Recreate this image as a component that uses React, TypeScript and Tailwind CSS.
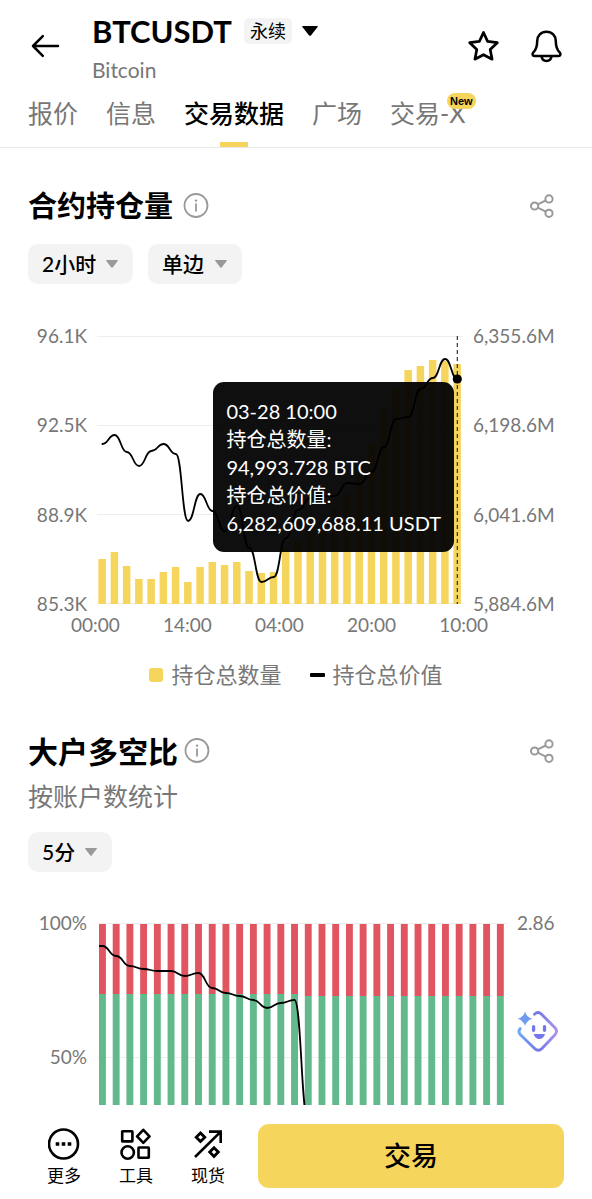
import type { ReactNode } from "react";

const tabs = [
  { label: "报价" },
  { label: "信息" },
  { label: "交易数据", active: true },
  { label: "广场" },
  { label: "交易-X", badge: "New" },
];

// y positions inside the 366x268 plot
const interestBars = [
  223, 216, 230, 243, 243, 236, 231, 246, 231, 226, 229, 226, 235, 237, 236,
  212, 205, 196, 186, 172, 158, 134, 107, 73, 52, 34, 30, 24, 25, 28,
];
const interestLine = [
  108, 99, 116, 130, 115, 108, 118, 185, 158, 175, 195, 170, 212, 246, 241,
  202, 174, 162, 160, 160, 147, 148, 136, 111, 83, 81, 53, 42, 23, 43,
];

// y positions inside the 410x182 plot
const ratioLine = [
  23, 33, 43, 46, 48, 48, 53, 50, 65, 70, 73, 77, 85, 80, 77, 198,
];

function smoothPath(values: number[], start: number, step: number) {
  return values
    .map((y, i) => {
      const x = start + i * step;
      if (i === 0) return `M${x} ${y}`;
      const mid = x - step / 2;
      return `C${mid} ${values[i - 1]} ${mid} ${y} ${x} ${y}`;
    })
    .join(" ");
}

function InfoIcon() {
  return (
    <svg className="h-[26px] w-[26px]" viewBox="0 0 26 26" fill="none">
      <circle cx="13" cy="12.5" r="11.5" stroke="#999" strokeWidth="1.8" />
      <circle cx="13" cy="7.6" r="1.2" fill="#999" />
      <path d="M13 10.500v8" stroke="#999" strokeWidth="1.8" />
    </svg>
  );
}

function ShareIcon() {
  return (
    <svg className="h-6 w-6" viewBox="0 0 24 24" fill="none" stroke="#999" strokeWidth="2">
      <circle cx="4.6" cy="12" r="3.6" />
      <circle cx="19" cy="4.9" r="3.6" />
      <circle cx="19" cy="19.3" r="3.6" />
      <path d="M7.8 10.4l8-3.9M7.8 13.7l8 3.9" />
    </svg>
  );
}

function SectionTitle({ children }: { children: ReactNode }) {
  return (
    <div className="flex h-10 items-center justify-between">
      {children}
      <button aria-label="分享" className="mr-[10px]">
        <ShareIcon />
      </button>
    </div>
  );
}

function Dropdown({ label, value, width }: { label: string; value: string; width: string }) {
  return (
    <label className={`relative block ${width}`}>
      <select
        aria-label={label}
        className="h-10 w-full appearance-none rounded-[10px] bg-[#f3f3f3] pl-[14px] text-[21px] font-medium text-black outline-none"
      >
        <option>{value}</option>
      </select>
      <svg
        className="pointer-events-none absolute top-4 right-[15px] h-2 w-3"
        viewBox="0 0 12 8"
        fill="#999"
      >
        <path d="M.6 0h10.8q.9 0 .4.8L6.7 7.4q-.7.9-1.4 0L.2.8Q-.3 0 .6 0z" />
      </svg>
    </label>
  );
}

function OpenInterestChart() {
  return (
    <div className="mt-[52px]">
      <div className="flex h-[268px] gap-[10px]">
        <div className="-my-[10px] flex w-[59px] flex-col justify-between text-right text-[19px] leading-[20px] text-[#777]">
          <span>96.1K</span>
          <span>92.5K</span>
          <span>88.9K</span>
          <span>85.3K</span>
        </div>
        <div className="relative min-w-0 flex-1">
          <svg
            className="h-full w-full overflow-visible"
            viewBox="0 0 366 268"
            preserveAspectRatio="none"
            fill="none"
          >
            {[0.5, 89.5, 178.5, 267.5].map((y) => (
              <path key={y} d={`M0 ${y}H366`} stroke="#eee" />
            ))}
            {interestBars.map((y, i) => (
              <rect key={i} x={1.4 + i * 12.24} y={y} width="7.5" height={268 - y} fill="#f5d55b" />
            ))}
            <path d="M360.3 0V268" stroke="#222" strokeWidth="1.1" strokeDasharray="4 3" />
            <path
              d={smoothPath(interestLine, 5.4, 12.24)}
              stroke="#000"
              strokeWidth="1.8"
              strokeLinecap="round"
            />
            <circle cx="360.3" cy="43" r="4.6" fill="#000" />
          </svg>
          <div className="absolute top-[46px] right-[9px] rounded-[11px] bg-black/94 px-[13px] py-[15px] text-[20px] leading-7 whitespace-nowrap text-white">
            <p>03-28 10:00</p>
            <p>持仓总数量:</p>
            <p>94,993.728 BTC</p>
            <p>持仓总价值:</p>
            <p>6,282,609,688.11 USDT</p>
          </div>
        </div>
        <div className="-my-[10px] flex w-[91px] flex-col justify-between text-[19px] leading-[20px] text-[#777]">
          <span>6,355.6M</span>
          <span>6,198.6M</span>
          <span>6,041.6M</span>
          <span>5,884.6M</span>
        </div>
      </div>
      <div className="mt-[11px] mr-[76px] ml-[43px] flex justify-between text-[19px] leading-[20px] text-[#777]">
        <span>00:00</span>
        <span>14:00</span>
        <span>04:00</span>
        <span>20:00</span>
        <span>10:00</span>
      </div>
      <div className="mt-[25px] flex items-center justify-center gap-7 text-[22px] leading-[30px] text-[#777]">
        <span className="flex items-center gap-2">
          <i className="h-[14px] w-[14px] rounded-[3px] bg-[#f5d55b]" />
          持仓总数量
        </span>
        <span className="flex items-center gap-2">
          <i className="h-1 w-[15px] rounded-[1px] bg-black" />
          持仓总价值
        </span>
      </div>
    </div>
  );
}

function AssistantIcon() {
  return (
    <svg className="h-[42px] w-[42px]" viewBox="0 0 42 42" fill="none">
      <defs>
        <linearGradient id="assistant" x1="2" y1="22" x2="41" y2="22" gradientUnits="userSpaceOnUse">
          <stop stopColor="#6fa8f5" />
          <stop offset="0.5" stopColor="#7377ea" />
          <stop offset="1" stopColor="#b295e8" />
        </linearGradient>
      </defs>
      <path
        d="M17.5 4.200Q21 .9 24.300 4L38 17.800Q41 21.300 38 24.700L25 38.500Q21.300 42 17.600 38.500L3.500 24.700Q.6 21.500 3.200 18.500"
        stroke="url(#assistant)"
        strokeWidth="2.9"
        strokeLinecap="round"
      />
      <path d="M8 1.500Q9.600 7.200 15.300 8.800 9.600 10.400 8 16.200 6.400 10.400 .7 8.800 6.400 7.200 8 1.500z" fill="#6f9bf0" />
      <path d="M16.600 16.700v3.600M27.500 16.700v3.600" stroke="#7377ea" strokeWidth="3.300" strokeLinecap="round" />
      <path d="M16.700 24h11.300q-1.500 5-5.700 5T16.700 24z" fill="#7377ea" />
    </svg>
  );
}

function RatioChart() {
  return (
    <div className="mt-[51px] flex h-[182px] gap-[10px]">
      <div className="-mt-[10px] flex w-[59px] flex-col gap-[114px] text-right text-[19px] leading-[20px] text-[#777]">
        <span>100%</span>
        <span>50%</span>
      </div>
      <svg
        className="h-full min-w-0 flex-1 overflow-hidden"
        viewBox="0 0 410 182"
        preserveAspectRatio="none"
        fill="none"
      >
        <path d="M0 .5H410M0 134.500H410" stroke="#eee" />
        {Array.from({ length: 30 }, (_, i) => {
          const split = i < 15 ? 71 : 73;
          return (
            <g key={i}>
              <rect x={2 + i * 13.72} y="1" width="6.9" height={split - 1} fill="#e15561" />
              <rect x={2 + i * 13.72} y={split} width="6.9" height={182 - split} fill="#62b98b" />
            </g>
          );
        })}
        <path d={`M2 23H5.4 ${smoothPath(ratioLine, 5.4, 13.72)}`} stroke="#000" strokeWidth="1.8" />
      </svg>
      <div className="-mt-[10px] w-[47px] text-[19px] leading-[20px] text-[#777]">
        <p>2.86</p>
        <button aria-label="智能助手" className="mt-[77px] block">
          <AssistantIcon />
        </button>
      </div>
    </div>
  );
}

const shortcuts = [
  {
    label: "更多",
    icon: (
      <>
        <circle cx="15.500" cy="16" r="14.500" />
        <path d="M7.700 16h3.600M13.700 16h3.600M19.700 16h3.600" strokeWidth="3.600" />
      </>
    ),
  },
  {
    label: "工具",
    icon: (
      <>
        <rect x="2.200" y="3.200" width="10.200" height="10.200" rx=".5" />
        <path d="M23.300 1.800l6.200 6.500-6.200 6.500-6.200-6.500z" strokeLinejoin="round" />
        <circle cx="7.700" cy="24.500" r="6.200" />
        <rect x="18.500" y="19.500" width="10.300" height="10.300" rx=".5" />
      </>
    ),
  },
  {
    label: "现货",
    icon: (
      <>
        <path d="M3 29L28.500 3.800M17 3.600H28.700V15" />
        <path
          d="M8.500 5l4.300 4.300-4.300 4.300-4.300-4.300zM22 19.800l4.300 4.300-4.300 4.300-4.300-4.300z"
          strokeWidth="2.800"
        />
      </>
    ),
  },
];

export default function App() {
  return (
    <div className="min-h-screen bg-white font-['Lato','Noto_Sans_CJK_SC',sans-serif] text-black">
      <header>
        <div className="flex items-center pt-2 pr-7 pl-[30px]">
          <button aria-label="返回">
            <svg className="h-8 w-8" viewBox="0 0 32 32" fill="none" stroke="#000" strokeWidth="2.5">
              <path d="M28 15H3M12.800 5.200L3 15l9.800 9.800" strokeLinecap="round" strokeLinejoin="round" />
            </svg>
          </button>
          <div className="ml-[30px] flex-1">
            <div className="flex h-[46px] items-center">
              <h1 className="text-[31px] font-bold">BTCUSDT</h1>
              <span className="ml-3 rounded-[5px] bg-[#f4f4f4] px-[6px] text-[18px] leading-[26px]">
                永续
              </span>
              <button aria-label="切换合约" className="ml-[10px]">
                <svg className="h-[10px] w-4" viewBox="0 0 16 10">
                  <path d="M.8 0h14.400q1 0 .4.900L8.900 9.400q-.9.900-1.800 0L.4.900Q-.2 0 .8 0z" />
                </svg>
              </button>
            </div>
            <p className="h-8 text-[21px] leading-8 text-[#777]">Bitcoin</p>
          </div>
          <div className="flex items-center gap-[29px]">
            <button aria-label="收藏">
              <svg className="h-[34px] w-[34px]" viewBox="0 0 34 34" fill="none" stroke="#000" strokeWidth="2.700">
                <path
                  d="M16.500 2.500l4.100 8.900 9.700 1.300-7.100 6.800 1.900 9.700L16.500 24.700 7.900 29.200l1.900-9.700-7.100-6.800 9.700-1.300z"
                  strokeLinejoin="round"
                />
              </svg>
            </button>
            <button aria-label="提醒">
              <svg className="h-[34px] w-[34px]" viewBox="0 0 34 34" fill="none" stroke="#000" strokeWidth="2.500">
                <path
                  d="M16.500 1.700c-5.500 0-9.300 4-9.300 9.300 0 5.500-.7 8.700-4 11.500-1.300 1.500-.6 3.400 1.200 3.400h24.200c1.800 0 2.500-1.900 1.200-3.400-3.300-2.800-4-6-4-11.500 0-5.300-3.800-9.300-9.300-9.300z"
                  strokeLinejoin="round"
                />
                <path d="M11.500 26.200c.4 3.200 2.400 4.800 5 4.800s4.600-1.600 5-4.800" />
              </svg>
            </button>
          </div>
        </div>
        <nav className="flex gap-7 border-b border-[#e8e8e8] px-7 text-[25px] leading-8 text-[#777]">
          {tabs.map((tab) => (
            <a
              key={tab.label}
              href="#"
              className={`relative pt-[11px] pb-[18px] whitespace-nowrap ${tab.active ? "font-medium text-black" : ""}`}
            >
              {tab.label}
              {tab.active && (
                <span className="absolute bottom-0 left-1/2 h-[5px] w-7 -translate-x-1/2 bg-[#f5d55b]" />
              )}
              {tab.badge && (
                <span className="absolute top-[7px] -right-[10px] rounded-full bg-[#f5d55b] px-[3px] font-['Liberation_Sans',sans-serif] text-[11px] leading-4 font-bold text-black">
                  {tab.badge}
                </span>
              )}
            </a>
          ))}
        </nav>
      </header>

      <main className="px-7">
        <section className="pt-[38px]">
          <SectionTitle>
            <div className="flex items-center gap-[10px]">
              <h2 className="text-[29px] font-bold">合约持仓量</h2>
              <InfoIcon />
            </div>
          </SectionTitle>
          <div className="mt-[18px] flex gap-[15px]">
            <Dropdown label="周期" value="2小时" width="w-[105px]" />
            <Dropdown label="统计方式" value="单边" width="w-[94px]" />
          </div>
          <OpenInterestChart />
        </section>

        <section className="pt-[41px]">
          <SectionTitle>
            <div className="flex items-center gap-[6px]">
              <h2 className="text-[30px] font-bold">大户多空比</h2>
              <InfoIcon />
            </div>
          </SectionTitle>
          <p className="mt-[10px] text-[25px] leading-[30px] text-[#777]">按账户数统计</p>
          <div className="mt-[21px] flex">
            <Dropdown label="周期" value="5分" width="w-[84px]" />
          </div>
          <RatioChart />
        </section>
      </main>

      <footer className="sticky bottom-0 flex items-center bg-white px-7 pt-[19px] pb-[11px]">
        {shortcuts.map((item) => (
          <button key={item.label} className="flex w-[72px] flex-col items-center gap-1 pt-[3px]">
            <svg className="h-8 w-8" viewBox="0 0 32 32" fill="none" stroke="#000" strokeWidth="2.600">
              {item.icon}
            </svg>
            <span className="text-[17px] leading-6">{item.label}</span>
          </button>
        ))}
        <button className="ml-[14px] h-16 flex-1 rounded-[11px] bg-[#f5d55b] text-[27px] font-medium">交易</button>
      </footer>
    </div>
  );
}
